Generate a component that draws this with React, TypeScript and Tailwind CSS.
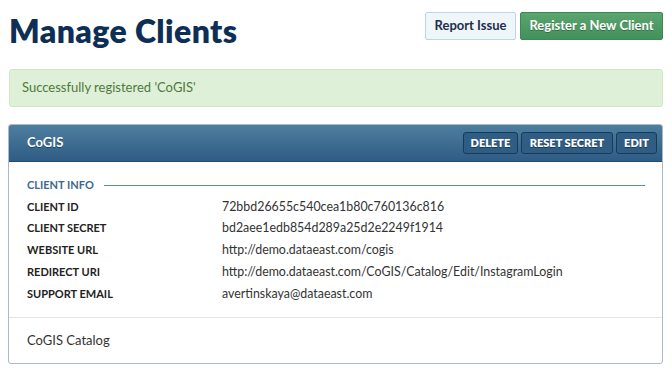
const rows: [string, string][] = [
  ['CLIENT ID', '72bbd26655c540cea1b80c760136c816'],
  ['CLIENT SECRET', 'bd2aee1edb854d289a25d2e2249f1914'],
  ['WEBSITE URL', 'http://demo.dataeast.com/cogis'],
  ['REDIRECT URI', 'http://demo.dataeast.com/CoGIS/Catalog/Edit/InstagramLogin'],
  ['SUPPORT EMAIL', 'avertinskaya@dataeast.com'],
];

function HeaderButton({ label, width }: { label: string; width: string }) {
  return (
    <button
      className={`${width} h-[22px] rounded-[3px] border border-[#173a5a] bg-[#2f5d84] text-[11px] font-extrabold text-white [text-shadow:0_1px_0_rgba(0,0,0,0.4)]`}
    >
      {label}
    </button>
  );
}

export default function App() {
  return (
    <div className="w-[672px] h-[371px] bg-white font-['Lato','Open_Sans',sans-serif] text-[#333]">
      <div className="pl-[9px] pr-[9px] pt-[12px]">
        <div className="flex items-start justify-between">
          <h1 className="text-[32px] leading-[34px] font-extrabold tracking-[0.4px] text-[#0e2f55] mt-[2px]">
            Manage Clients
          </h1>
          <div className="flex gap-[4px]">
            <button className="h-[28px] w-[91px] rounded-[2px] border border-[#bcd6e8] bg-[#eef6f9] text-[13px] font-bold text-[#1d2f4a]">
              Report Issue
            </button>
            <button className="h-[28px] w-[143px] rounded-[2px] border border-[#3e8655] bg-gradient-to-b from-[#5aa570] to-[#43905a] text-[13px] font-bold text-white [text-shadow:0_1px_0_rgba(0,0,0,0.3)]">
              Register a New Client
            </button>
          </div>
        </div>

        <div className="mt-[21px] h-[38px] flex items-center pl-[12px] rounded-[3px] border border-[#d2e8c8] bg-[#dff0d8] text-[13px] text-[#50783c]">
          Successfully registered 'CoGIS'
        </div>

        <div className="mt-[17px] ml-[-1px] rounded-[3px] border border-[#a9b9ca] overflow-hidden">
          <div className="h-[37px] flex items-center justify-between pl-[18px] pr-[5px] bg-gradient-to-b from-[#4e7e9e] to-[#2e5c85] border-b border-[#234c70]">
            <span className="text-[13px] font-bold text-white [text-shadow:0_1px_0_rgba(0,0,0,0.4)]">CoGIS</span>
            <div className="flex gap-[3px]">
              <HeaderButton label="DELETE" width="w-[55px]" />
              <HeaderButton label="RESET SECRET" width="w-[92px]" />
              <HeaderButton label="EDIT" width="w-[41px]" />
            </div>
          </div>

          <div className="pl-[18px] pr-[17px] pt-[16px] pb-[12px]">
            <div className="flex items-center gap-[10px] h-[14px]">
              <span className="text-[11px] font-bold text-[#3a6a90]">CLIENT INFO</span>
              <div className="flex-1 h-px bg-[#5f8aae]" />
            </div>
            <div className="mt-[4px]">
              {rows.map(([k, v]) => (
                <div key={k} className="flex items-center h-[21.75px]">
                  <span className="w-[195px] text-[11px] font-bold text-[#222]">{k}</span>
                  <span className="text-[12.4px] text-[#333]">{v}</span>
                </div>
              ))}
            </div>
          </div>

          <div className="border-t border-[#dfe8de] h-[46px] flex items-center pl-[18px] text-[13px] text-[#333]">
            CoGIS Catalog
          </div>
        </div>
      </div>
    </div>
  );
}
